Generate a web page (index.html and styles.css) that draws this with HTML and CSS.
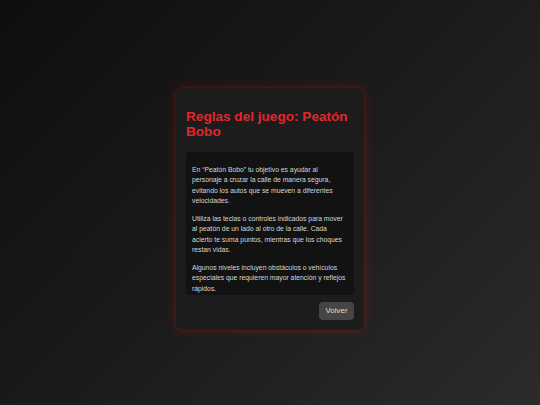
FILE: index.html
```html
<!DOCTYPE html>
<html lang="es">
<head>
<meta charset="utf-8">
<title>Reglas del juego</title>
<link rel="stylesheet" href="styles.css">
</head>
<body>
<main class="screen">
  <section class="card">
    <h1 class="title">Reglas del juego: Peatón Bobo</h1>
    <div class="rules">
      <p>En “Peatón Bobo” tu objetivo es ayudar al personaje a cruzar la calle de manera segura, evitando los autos que se mueven a diferentes velocidades.</p>
      <p>Utiliza las teclas o controles indicados para mover al peatón de un lado al otro de la calle. Cada acierto te suma puntos, mientras que los choques restan vidas.</p>
      <p>Algunos niveles incluyen obstáculos o vehículos especiales que requieren mayor atención y reflejos rápidos.</p>
    </div>
    <div class="actions">
      <button class="btn">Volver</button>
    </div>
  </section>
</main>
</body>
</html>
```
FILE: styles.css
```css
html, body {
  margin: 0;
  padding: 0;
  height: 100%;
}
body {
  background: linear-gradient(135deg, #0e0e0e 0%, #1b1b1b 50%, #2b2b2b 100%);
  font-family: "Liberation Sans", Arial, sans-serif;
}
.screen {
  height: 405px;
  display: flex;
  align-items: center;
  justify-content: center;
  box-sizing: border-box;
  padding-top: 13px;
}
.card {
  width: 188px;
  box-sizing: border-box;
  background: #1c1c1c;
  border-radius: 7px;
  padding: 20.5px 10px 10.5px;
  box-shadow: 0 0 3px rgba(200, 25, 25, 0.35), 0 0 12px 1px rgba(200, 20, 20, 0.28);
}
.title {
  margin: 0 0 12px;
  color: #e3262b;
  font-size: 13.6px;
  line-height: 15.5px;
  font-weight: bold;
}
.rules {
  background: #121212;
  border-radius: 4px;
  padding: 6px 6px 0;
  height: 143px;
  overflow: hidden;
  box-sizing: border-box;
}
.rules p {
  margin: 7px 0;
  color: #d6d6d6;
  font-size: 6.8px;
  line-height: 10.5px;
}
.actions {
  display: flex;
  justify-content: flex-end;
  margin-top: 7px;
}
.btn {
  background: #454545;
  color: #dddddd;
  border: none;
  border-radius: 4px;
  font-family: "Liberation Sans", Arial, sans-serif;
  font-size: 8px;
  width: 35px;
  height: 18px;
  padding: 0;
}
```
